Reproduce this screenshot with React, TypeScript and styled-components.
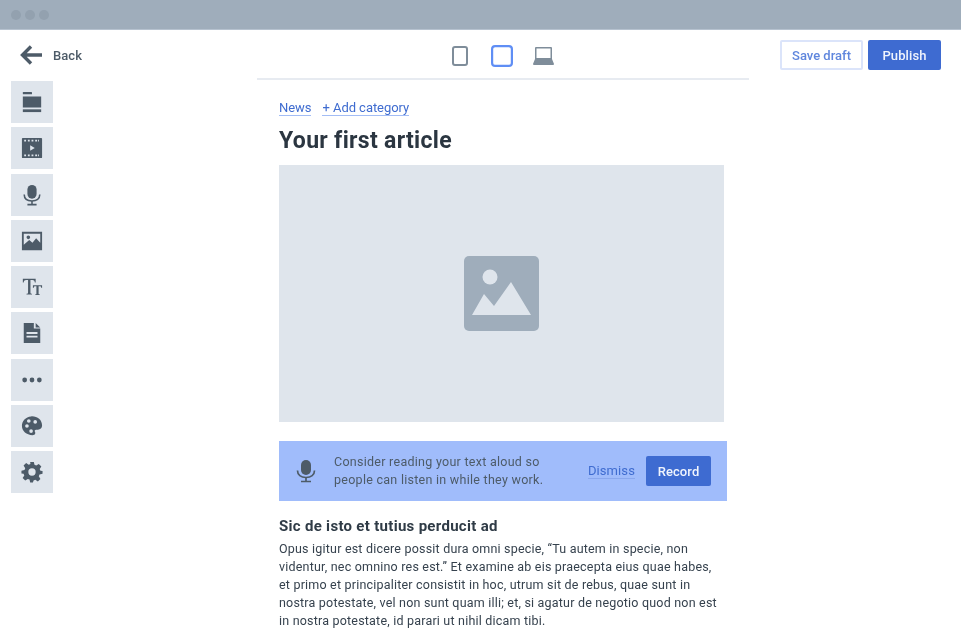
import styled, { createGlobalStyle } from "styled-components";
import type { ReactNode } from "react";

const GlobalStyle = createGlobalStyle`
  html, body {
    margin: 0;
    background: #fff;
    overflow: hidden;
  }
  body {
    font-family: Roboto, "Liberation Sans", sans-serif;
    color: #2f3b46;
  }
`;

const Page = styled.div`
  width: 961px;
  height: 640px;
  overflow: hidden;
  filter: blur(0.6px);
`;

const TitleBar = styled.div`
  height: 30px;
  box-sizing: border-box;
  background: #9fadbb;
  border-bottom: 1px solid #b6c2cf;
  display: flex;
  align-items: center;
  gap: 4px;
  padding-left: 11px;
`;

const WindowDot = styled.span`
  width: 10px;
  height: 10px;
  border-radius: 50%;
  background: #93a1af;
`;

const Columns = styled.div`
  display: grid;
  grid-template-columns: 257px 492px 1fr;
`;

const LeftColumn = styled.aside`
  display: flex;
  flex-direction: column;
  padding-left: 11px;
`;

const BackLink = styled.a`
  height: 51px;
  display: flex;
  align-items: center;
  gap: 11px;
  padding-left: 9px;
  padding-bottom: 1px;
  box-sizing: border-box;
  font-size: 13px;
  font-weight: 500;
  letter-spacing: 0.05px;
  color: #4d5b68;
`;

const ToolRail = styled.div`
  display: flex;
  flex-direction: column;
  gap: 4.25px;
`;

const ToolTile = styled.div`
  width: 42px;
  height: 42px;
  background: #dfe5ec;
  display: flex;
  align-items: center;
  justify-content: center;
  color: #4d5b68;
`;

const CenterColumn = styled.main`
  display: flex;
  flex-direction: column;
`;

const DeviceBar = styled.div`
  height: 50px;
  box-sizing: border-box;
  border-bottom: 2px solid #e7ebf1;
  display: flex;
  align-items: center;
  justify-content: center;
  padding-top: 4px;
  padding-left: 0;
`;

const DeviceSlot = styled.span<{ $gap: number }>`
  display: flex;
  margin-right: ${({ $gap }) => $gap}px;
`;

const Article = styled.article`
  padding: 20px 25px 0 22px;
`;

const CategoryRow = styled.div`
  display: flex;
  gap: 11px;
`;

const CategoryLink = styled.a`
  font-size: 13px;
  line-height: 15px;
  letter-spacing: -0.05px;
  color: #3f6cd0;
  border-bottom: 1px solid #a3bdf5;
`;

const ArticleTitle = styled.h1`
  margin: 12px 0 11px;
  font-size: 23px;
  line-height: 26px;
  font-weight: 700;
  letter-spacing: 0.32px;
  color: #2b3641;
`;

const HeroPlaceholder = styled.div`
  width: 445px;
  height: 257px;
  background: #dfe5ec;
  display: flex;
  align-items: center;
  justify-content: center;
`;

const Prompt = styled.div`
  margin-top: 19px;
  height: 60px;
  width: 448px;
  background: #a0bcfb;
  display: flex;
  align-items: center;
  padding: 0 16px 0 15px;
  box-sizing: border-box;
  color: #4d5b68;
`;

const PromptText = styled.p`
  margin: 0 0 0 16px;
  flex: 1;
  font-size: 12.5px;
  line-height: 18px;
  letter-spacing: 0.27px;
`;

const DismissLink = styled.a`
  font-size: 13px;
  line-height: 15px;
  letter-spacing: 0.1px;
  color: #3f6cd0;
  border-bottom: 1px solid #8aa8ee;
  margin-right: 11px;
`;

const PrimaryButton = styled.button<{ $width: number }>`
  width: ${({ $width }) => $width}px;
  height: 30px;
  border: 0;
  border-radius: 2px;
  background: #3e6bd1;
  color: #f0f4fd;
  font: 500 13px Roboto, sans-serif;
  letter-spacing: 0.1px;
  padding: 0;
`;

const OutlineButton = styled.button`
  width: 83px;
  height: 30px;
  box-sizing: border-box;
  border: 2px solid #dbe4fa;
  border-radius: 2px;
  background: #fff;
  color: #5f86dd;
  font: 500 13px Roboto, sans-serif;
  letter-spacing: 0;
  padding: 0;
`;

const SectionHeading = styled.h2`
  margin: 16px 0 4px;
  font-size: 15px;
  line-height: 19px;
  font-weight: 700;
  letter-spacing: 0.3px;
  color: #2f3b46;
`;

const BodyText = styled.p`
  margin: 0;
  width: 441px;
  font-size: 12.5px;
  line-height: 18px;
  letter-spacing: 0.2px;
  color: #36424e;
`;

const Actions = styled.div`
  display: flex;
  justify-content: flex-end;
  gap: 5px;
  padding: 10px 20px 0 0;
`;

const Icon = ({ size, children, vb = 24 }: { size: number; children: ReactNode; vb?: number }) => (
  <svg width={size} height={size} viewBox={`0 0 ${vb} ${vb}`} fill="currentColor">
    {children}
  </svg>
);

const MicIcon = ({ size }: { size: number }) => (
  <Icon size={size}>
    <rect x="7" y="1" width="10" height="15" rx="5" />
    <path d="M3.500 11.500c0 4.500 3.500 7 8.500 7s8.500-2.500 8.500-7" fill="none" stroke="currentColor" strokeWidth="1.700" />
    <path d="M12 18.500v3.500M7 22.500h10" fill="none" stroke="currentColor" strokeWidth="1.700" />
  </Icon>
);

const tools: ReactNode[] = [
  <Icon size={22} key="stack">
    <rect x="2" y="1" width="10" height="2.600" rx="0.600" />
    <rect x="2" y="6" width="20" height="12" />
    <rect x="2" y="20" width="20" height="3" />
  </Icon>,
  <Icon size={22} key="film">
    <path
      fillRule="evenodd"
      d="M2 1h20a1 1 0 0 1 1 1v20a1 1 0 0 1-1 1H2a1 1 0 0 1-1-1V2a1 1 0 0 1 1-1zm1.500 2v2h2V3zm4 0v2h2V3zm4 0v2h2V3zm4 0v2h2V3zm3 0v2h1V3zM3.500 19v2h2v-2zm4 0v2h2v-2zm4 0v2h2v-2zm4 0v2h2v-2zm3 0v2h1v-2zM10 9v6l5-3z"
    />
  </Icon>,
  <MicIcon size={22} key="mic" />,
  <Icon size={22} key="image">
    <path
      fillRule="evenodd"
      d="M1 2h22v20H1zm2 2v12l6-5 3.500 3 4-5 4.500 5V4zM8 6a2 2 0 1 1 0 4 2 2 0 0 1 0-4z"
    />
  </Icon>,
  <Icon size={22} key="type">
    <path
      d="M2 3h14v4h-.9c-.3-1.700-1-2.600-2.600-2.600H10.300V18c0 1 .4 1.300 1.700 1.400v.8H6v-.8c1.300-.1 1.700-.4 1.700-1.400V4.400H5.500C3.900 4.400 3.200 5.300 2.900 7H2zM13 10h10v3h-.7c-.2-1.100-.7-1.700-1.800-1.700h-1.300V19c0 .7.300.9 1.200 1v.7h-4.800V20c.9-.1 1.200-.3 1.200-1v-7.700h-1.300c-1.100 0-1.600.6-1.800 1.700H13z"
    />
  </Icon>,
  <Icon size={22} key="doc">
    <path
      fillRule="evenodd"
      d="M3 1h11v6h7v16H3zm13 0 5 5h-5zM6 11v2h12v-2zm0 4v2h12v-2z"
    />
  </Icon>,
  <Icon size={22} key="more">
    <circle cx="4" cy="12" r="2.600" />
    <circle cx="12" cy="12" r="2.600" />
    <circle cx="20" cy="12" r="2.600" />
  </Icon>,
  <Icon size={22} key="palette">
    <path
      fillRule="evenodd"
      d="M11 1.500c6.500-.5 12 3.600 12 10 0 3-2 4.500-4.500 4.500h-2c-1.500 0-2 1.200-1.300 2.300.8 1.300.5 3.700-2.700 3.700C6 22 1 17.500 1 11.800 1 6.500 5 2 11 1.500zM6.500 10a2 2 0 1 0 0 4 2 2 0 0 0 0-4zm2-5.500a2 2 0 1 0 0 4 2 2 0 0 0 0-4zm7 1a2 2 0 1 0 0 4 2 2 0 0 0 0-4zm-4.500 10a2 2 0 1 0 0 4 2 2 0 0 0 0-4z"
    />
  </Icon>,
  <Icon size={22} key="gear">
    <path
      fillRule="evenodd"
      d="M10 1h4l.7 3.200 1.900.8 2.800-1.800 2.800 2.800-1.800 2.800.8 1.900L23.500 11v3l-3.300.8-.8 1.900 1.800 2.800-2.800 2.800-2.800-1.800-1.900.8L13 23.500h-3l-.7-3.200-1.900-.8-2.800 1.800-2.800-2.800 1.800-2.800-.8-1.900L.5 13.500v-3l3.300-.8.8-1.900L2.800 5 5.600 2.200l2.800 1.800 1.900-.8zM12 8a4 4 0 1 0 0 8 4 4 0 0 0 0-8z"
    />
  </Icon>,
];

export default function App() {
  return (
    <>
      <GlobalStyle />
      <Page>
        <TitleBar>
          <WindowDot />
          <WindowDot />
          <WindowDot />
        </TitleBar>
        <Columns>
          <LeftColumn>
            <BackLink>
              <svg width="22" height="20" viewBox="0 0 22 20" fill="none" stroke="#4d5b68" strokeWidth="3.400">
                <path d="M22 10H3M11 1.500 2.500 10l8.500 8.500" />
              </svg>
              Back
            </BackLink>
            <ToolRail>
              {tools.map((tool, idx) => (
                <ToolTile key={idx}>{tool}</ToolTile>
              ))}
            </ToolRail>
          </LeftColumn>

          <CenterColumn>
            <DeviceBar>
              <DeviceSlot $gap={23}>
                <svg width="16" height="20" viewBox="0 0 16 20" fill="none" stroke="#7f8d9a" strokeWidth="2">
                  <rect x="1" y="1" width="14" height="18" rx="2" />
                </svg>
              </DeviceSlot>
              <DeviceSlot $gap={20}>
                <svg width="22" height="22" viewBox="0 0 22 22" fill="none" stroke="#5f8ef5" strokeWidth="2.200">
                  <rect x="1.100" y="1.100" width="19.800" height="19.800" rx="3" />
                </svg>
              </DeviceSlot>
              <DeviceSlot $gap={0}>
                <svg width="21" height="20" viewBox="0 0 21 20" fill="#7f8d9a">
                  <path fillRule="evenodd" d="M3 1h15a1 1 0 0 1 1 1v11H2V2a1 1 0 0 1 1-1zm.500 1.500V12h14V2.500z" />
                  <path d="M2 13h17l2 5a1 1 0 0 1-1 1H1a1 1 0 0 1-1-1z" />
                </svg>
              </DeviceSlot>
            </DeviceBar>
            <Article>
              <CategoryRow>
                <CategoryLink>News</CategoryLink>
                <CategoryLink>+ Add category</CategoryLink>
              </CategoryRow>
              <ArticleTitle>Your first article</ArticleTitle>
              <HeroPlaceholder>
                <svg width="75" height="75" viewBox="0 0 75 75">
                  <rect width="75" height="75" rx="5" fill="#9fadbb" />
                  <circle cx="26" cy="21" r="7.500" fill="#dfe5ec" />
                  <path d="M8 59l12-21 10 12 17-24 20 33z" fill="#dfe5ec" />
                </svg>
              </HeroPlaceholder>
              <Prompt>
                <MicIcon size={24} />
                <PromptText>
                  Consider reading your text aloud so
                  <br />
                  people can listen in while they work.
                </PromptText>
                <DismissLink>Dismiss</DismissLink>
                <PrimaryButton $width={65}>Record</PrimaryButton>
              </Prompt>
              <SectionHeading>Sic de isto et tutius perducit ad</SectionHeading>
              <BodyText>
                Opus igitur est dicere possit dura omni specie, “Tu autem in specie, non videntur, nec omnino res
                est.” Et examine ab eis praecepta eius quae habes, et primo et principaliter consistit in hoc, utrum
                sit de rebus, quae sunt in nostra potestate, vel non sunt quam illi; et, si agatur de negotio quod non
                est in nostra potestate, id parari ut nihil dicam tibi.
              </BodyText>
            </Article>
          </CenterColumn>

          <Actions>
            <OutlineButton>Save draft</OutlineButton>
            <PrimaryButton $width={73}>Publish</PrimaryButton>
          </Actions>
        </Columns>
      </Page>
    </>
  );
}
